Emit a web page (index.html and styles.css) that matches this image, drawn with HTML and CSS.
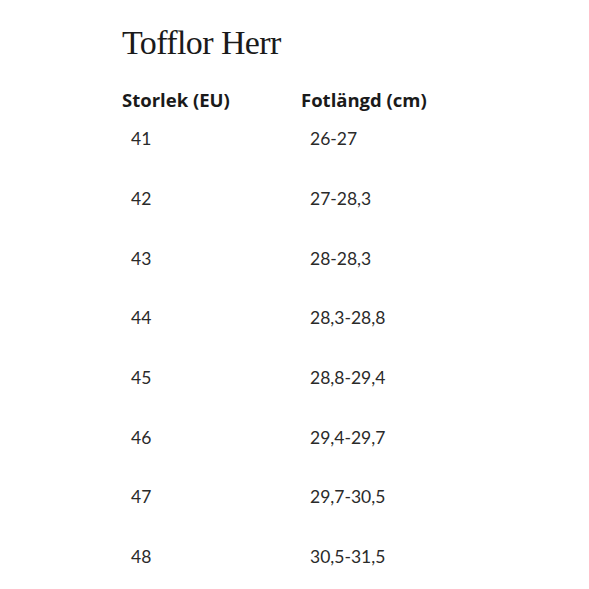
FILE: index.html
```html
<!DOCTYPE html>
<html lang="sv">
<head>
<meta charset="utf-8">
<title>Tofflor Herr</title>
<link rel="stylesheet" href="styles.css">
</head>
<body>
<main class="page">
  <h1 class="title">Tofflor Herr</h1>
  <div class="table">
    <div class="row head"><div class="cell">Storlek (EU)</div><div class="cell">Fotlängd (cm)</div></div>
    <div class="row"><div class="cell">41</div><div class="cell">26-27</div></div>
    <div class="row"><div class="cell">42</div><div class="cell">27-28,3</div></div>
    <div class="row"><div class="cell">43</div><div class="cell">28-28,3</div></div>
    <div class="row"><div class="cell">44</div><div class="cell">28,3-28,8</div></div>
    <div class="row"><div class="cell">45</div><div class="cell">28,8-29,4</div></div>
    <div class="row"><div class="cell">46</div><div class="cell">29,4-29,7</div></div>
    <div class="row"><div class="cell">47</div><div class="cell">29,7-30,5</div></div>
    <div class="row"><div class="cell">48</div><div class="cell">30,5-31,5</div></div>
  </div>
</main>
</body>
</html>
```
FILE: styles.css
```css
html, body {
  margin: 0;
  padding: 0;
  background: #fff;
}
.page {
  padding: 23px 0 0 122px;
  color: #222;
}
.title {
  margin: 0;
  font-family: "Liberation Serif", "DejaVu Serif", serif;
  font-weight: 400;
  font-size: 34px;
  line-height: 40px;
  letter-spacing: -0.6px;
  color: #1a1a1a;
}
.table {
  margin-top: 26px;
  display: grid;
  grid-template-columns: 179px 200px;
  font-family: "Lato", "Noto Sans", sans-serif;
}
.row {
  display: contents;
}
.row .cell {
  height: 59.7px;
  display: flex;
  align-items: center;
  padding-left: 9px;
  font-size: 17.5px;
  font-weight: 400;
  color: #2a2a2a;
}
.row.head .cell {
  height: 20px;
  padding-left: 0;
  font-family: "Open Sans", "Noto Sans", sans-serif;
  font-weight: 700;
  font-size: 18.5px;
  color: #1a1a1a;
}
```
